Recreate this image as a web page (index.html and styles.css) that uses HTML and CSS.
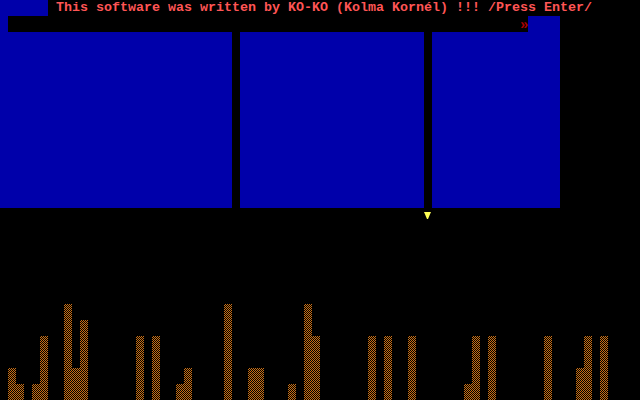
FILE: index.html
```html
<!DOCTYPE html>
<html>
<head>
<meta charset="utf-8">
<link rel="stylesheet" href="styles.css">
</head>
<body>
<div class="screen">
  <div class="row-title">
    <div class="blue tab"></div>
    <div class="title">This software was written by KO-KO (Kolma Kornél) !!! /Press Enter/</div>
  </div>
  <div class="row-input">
    <div class="blue edge"></div>
    <div class="field"><span class="mark">»</span></div>
    <div class="blue cap"></div>
  </div>
  <div class="panels">
    <div class="blue p1"></div>
    <div class="blue p2"></div>
    <div class="blue p3"></div>
  </div>
  <div class="row-marker">
    <svg class="tri" width="8" height="8" viewBox="0 0 8 8"><polygon points="0,0 7,0 4,7 3,7" fill="#ffff55"/></svg>
  </div>
  <div class="spacer"></div>
  <div class="bars">
    <i></i><i style="height:32px"></i><i style="height:16px"></i><i></i><i style="height:16px"></i><i style="height:64px"></i><i></i><i></i>
    <i style="height:96px"></i><i style="height:32px"></i><i style="height:80px"></i><i></i><i></i><i></i><i></i><i></i>
    <i></i><i style="height:64px"></i><i></i><i style="height:64px"></i><i></i><i></i><i style="height:16px"></i><i style="height:32px"></i>
    <i></i><i></i><i></i><i></i><i style="height:96px"></i><i></i><i></i><i style="height:32px"></i>
    <i style="height:32px"></i><i></i><i></i><i></i><i style="height:16px"></i><i></i><i style="height:96px"></i><i style="height:64px"></i>
    <i></i><i></i><i></i><i></i><i></i><i></i><i style="height:64px"></i><i></i>
    <i style="height:64px"></i><i></i><i></i><i style="height:64px"></i><i></i><i></i><i></i><i></i>
    <i></i><i></i><i style="height:16px"></i><i style="height:64px"></i><i></i><i style="height:64px"></i><i></i><i></i>
    <i></i><i></i><i></i><i></i><i style="height:64px"></i><i></i><i></i><i></i>
    <i style="height:32px"></i><i style="height:64px"></i><i></i><i style="height:64px"></i><i></i><i></i><i></i><i></i>
  </div>
</div>
</body>
</html>
```
FILE: styles.css
```css
html, body {
  margin: 0;
  padding: 0;
  background: #000;
}
.screen {
  width: 640px;
  height: 400px;
  display: flex;
  flex-direction: column;
  background: #000;
  overflow: hidden;
  font-family: "Liberation Mono", "DejaVu Sans Mono", monospace;
  font-size: 13.3333px;
  font-weight: bold;
  line-height: 16px;
}
.blue { background: #0000aa; }
.row-title {
  display: flex;
  height: 16px;
  gap: 8px;
}
.tab { width: 48px; height: 16px; }
.title {
  color: #ff5555;
  white-space: pre;
}
.row-input {
  display: flex;
  height: 16px;
}
.edge { width: 8px; }
.field {
  width: 520px;
  display: flex;
  justify-content: flex-end;
}
.mark {
  width: 8px;
  color: #aa0000;
  font-size: 14px;
  line-height: 16px;
  position: relative;
  top: 1px;
}
.cap { width: 32px; }
.panels {
  display: flex;
  height: 176px;
  gap: 8px;
}
.p1 { width: 232px; }
.p2 { width: 184px; }
.p3 { width: 128px; }
.row-marker {
  height: 16px;
  padding-left: 424px;
  padding-top: 4px;
  box-sizing: border-box;
}
.tri { display: block; }
.spacer { flex: 1; }
.bars {
  display: flex;
  align-items: flex-end;
  height: 96px;
}
.bars i {
  display: block;
  width: 8px;
  height: 0;
  background-image: url("data:image/svg+xml,%3Csvg xmlns='http://www.w3.org/2000/svg' width='2' height='2' shape-rendering='crispEdges'%3E%3Crect x='1' y='0' width='1' height='1' fill='%23c86e14'/%3E%3Crect x='0' y='1' width='1' height='1' fill='%23c86e14'/%3E%3C/svg%3E");
  background-size: 2px 2px;
  background-color: #000;
}
```
